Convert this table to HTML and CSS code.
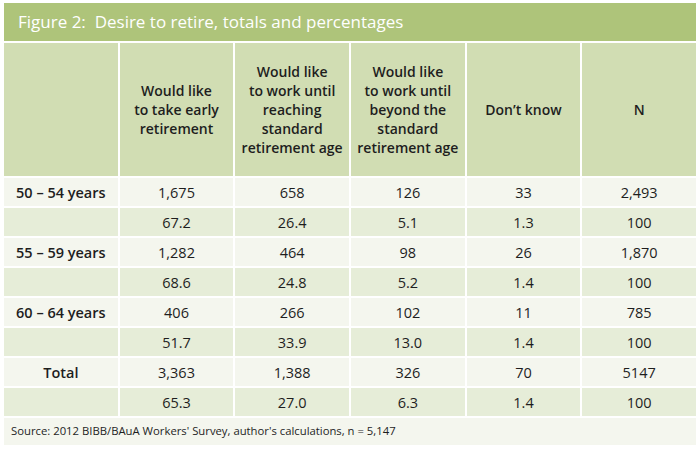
FILE: index.html
```html
<!DOCTYPE html>
<html lang="en">
<head>
<meta charset="utf-8">
<title>Figure 2: Desire to retire, totals and percentages</title>
<link rel="stylesheet" href="styles.css">
</head>
<body>
<div class="figure">
  <div class="title">Figure 2:&nbsp; Desire to retire, totals and percentages</div>
  <div class="grid">
    <div class="hd"></div>
    <div class="hd">Would like<br>to take early<br>retirement</div>
    <div class="hd">Would like<br>to work until<br>reaching<br>standard<br>retirement age</div>
    <div class="hd">Would like<br>to work until<br>beyond the<br>standard<br>retirement age</div>
    <div class="hd">Don’t know</div>
    <div class="hd">N</div>

    <div class="c a lbl">50 – 54 years</div><div class="c a">1,675</div><div class="c a">658</div><div class="c a">126</div><div class="c a">33</div><div class="c a">2,493</div>
    <div class="c b"></div><div class="c b">67.2</div><div class="c b">26.4</div><div class="c b">5.1</div><div class="c b">1.3</div><div class="c b">100</div>
    <div class="c a lbl">55 – 59 years</div><div class="c a">1,282</div><div class="c a">464</div><div class="c a">98</div><div class="c a">26</div><div class="c a">1,870</div>
    <div class="c b"></div><div class="c b">68.6</div><div class="c b">24.8</div><div class="c b">5.2</div><div class="c b">1.4</div><div class="c b">100</div>
    <div class="c a lbl">60 – 64 years</div><div class="c a">406</div><div class="c a">266</div><div class="c a">102</div><div class="c a">11</div><div class="c a">785</div>
    <div class="c b"></div><div class="c b">51.7</div><div class="c b">33.9</div><div class="c b">13.0</div><div class="c b">1.4</div><div class="c b">100</div>
    <div class="c a lbl">Total</div><div class="c a">3,363</div><div class="c a">1,388</div><div class="c a">326</div><div class="c a">70</div><div class="c a">5147</div>
    <div class="c b"></div><div class="c b">65.3</div><div class="c b">27.0</div><div class="c b">6.3</div><div class="c b">1.4</div><div class="c b">100</div>
  </div>
  <div class="source">Source: 2012 BIBB/BAuA Workers' Survey, author's calculations, n = 5,147</div>
</div>
</body>
</html>
```
FILE: styles.css
```css
html, body {
  margin: 0;
  padding: 0;
  background: #ffffff;
}
body {
  font-family: "Open Sans", "DejaVu Sans Condensed", sans-serif;
  font-stretch: 90%;
  color: #1e1e1e;
}
.figure {
  margin: 3px 4px 0 4px;
  display: flex;
  flex-direction: column;
  gap: 2px;
}
.title {
  background: #aec47a;
  color: #ffffff;
  height: 38px;
  font-size: 17px;
  font-stretch: 100%;
  line-height: 37px;
  padding-left: 14px;
  font-weight: 500;
}
.grid {
  display: grid;
  grid-template-columns: repeat(6, 1fr);
  grid-template-rows: 133px repeat(8, 28px);
  gap: 2px;
}
.hd {
  background: #d1ddb3;
  font-weight: 600;
  font-size: 14px;
  line-height: 19px;
  display: flex;
  align-items: center;
  justify-content: center;
  text-align: center;
}
.c {
  display: flex;
  align-items: center;
  justify-content: center;
  font-size: 14.5px;
}
.lbl {
  font-weight: 600;
}
.a {
  background: #f4f6ee;
}
.b {
  background: #e6edd8;
}
.source {
  background: #f4f6ee;
  height: 27px;
  line-height: 26px;
  font-size: 11.3px;
  padding-left: 7px;
}
```
